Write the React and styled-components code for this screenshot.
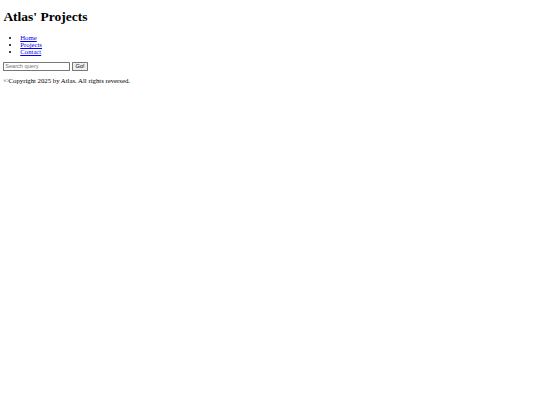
import React from 'react';
import styled, { createGlobalStyle } from 'styled-components';

const GlobalStyle = createGlobalStyle`
  body {
    margin: 0;
    background: #fff;
  }
`;

// the reference is a 1280px-wide page shrunk to 540px
const Page = styled.div`
  zoom: 0.421875;
  margin: 8px;
  font-family: "Liberation Serif", "Times New Roman", serif;
  font-size: 16px;
  color: #000;
`;

const Title = styled.h1`
  font-size: 32px;
  font-weight: bold;
  margin: 21.44px 0;
`;

const NavList = styled.ul`
  margin: 16px 0;
  padding-left: 40px;
  list-style: disc;
`;

const NavLink = styled.a`
  color: #0000ee;
  text-decoration: underline;
`;

const SearchForm = styled.form`
  margin: 16px 0;
`;

const SearchInput = styled.input`
  width: 150px;
  font-family: "Liberation Sans", Arial, sans-serif;
  font-size: 13.333px;
  padding: 1px 2px;
  border: 1px solid #767676;
  border-radius: 2px;

  &::placeholder {
    color: #757575;
  }
`;

const GoButton = styled.button`
  margin-left: 4px;
  font-family: "Liberation Sans", Arial, sans-serif;
  font-size: 13.333px;
  padding: 1px 6px;
  background: #efefef;
  border: 1px solid #767676;
  border-radius: 2px;
`;

const Footer = styled.footer`
  margin: 16px 0;
`;

export default function App() {
  return (
    <>
      <GlobalStyle />
      <Page>
        <header>
          <Title>Atlas' Projects</Title>
          <nav>
            <NavList>
              <li><NavLink href="#">Home</NavLink></li>
              <li><NavLink href="#">Projects</NavLink></li>
              <li><NavLink href="#">Contact</NavLink></li>
            </NavList>
          </nav>
        </header>
        <SearchForm onSubmit={(e) => e.preventDefault()}>
          <SearchInput type="text" placeholder="Search query" />
          <GoButton type="submit">Go!</GoButton>
        </SearchForm>
        <Footer>©Copyright 2025 by Atlas. All rights reversed.</Footer>
      </Page>
    </>
  );
}
